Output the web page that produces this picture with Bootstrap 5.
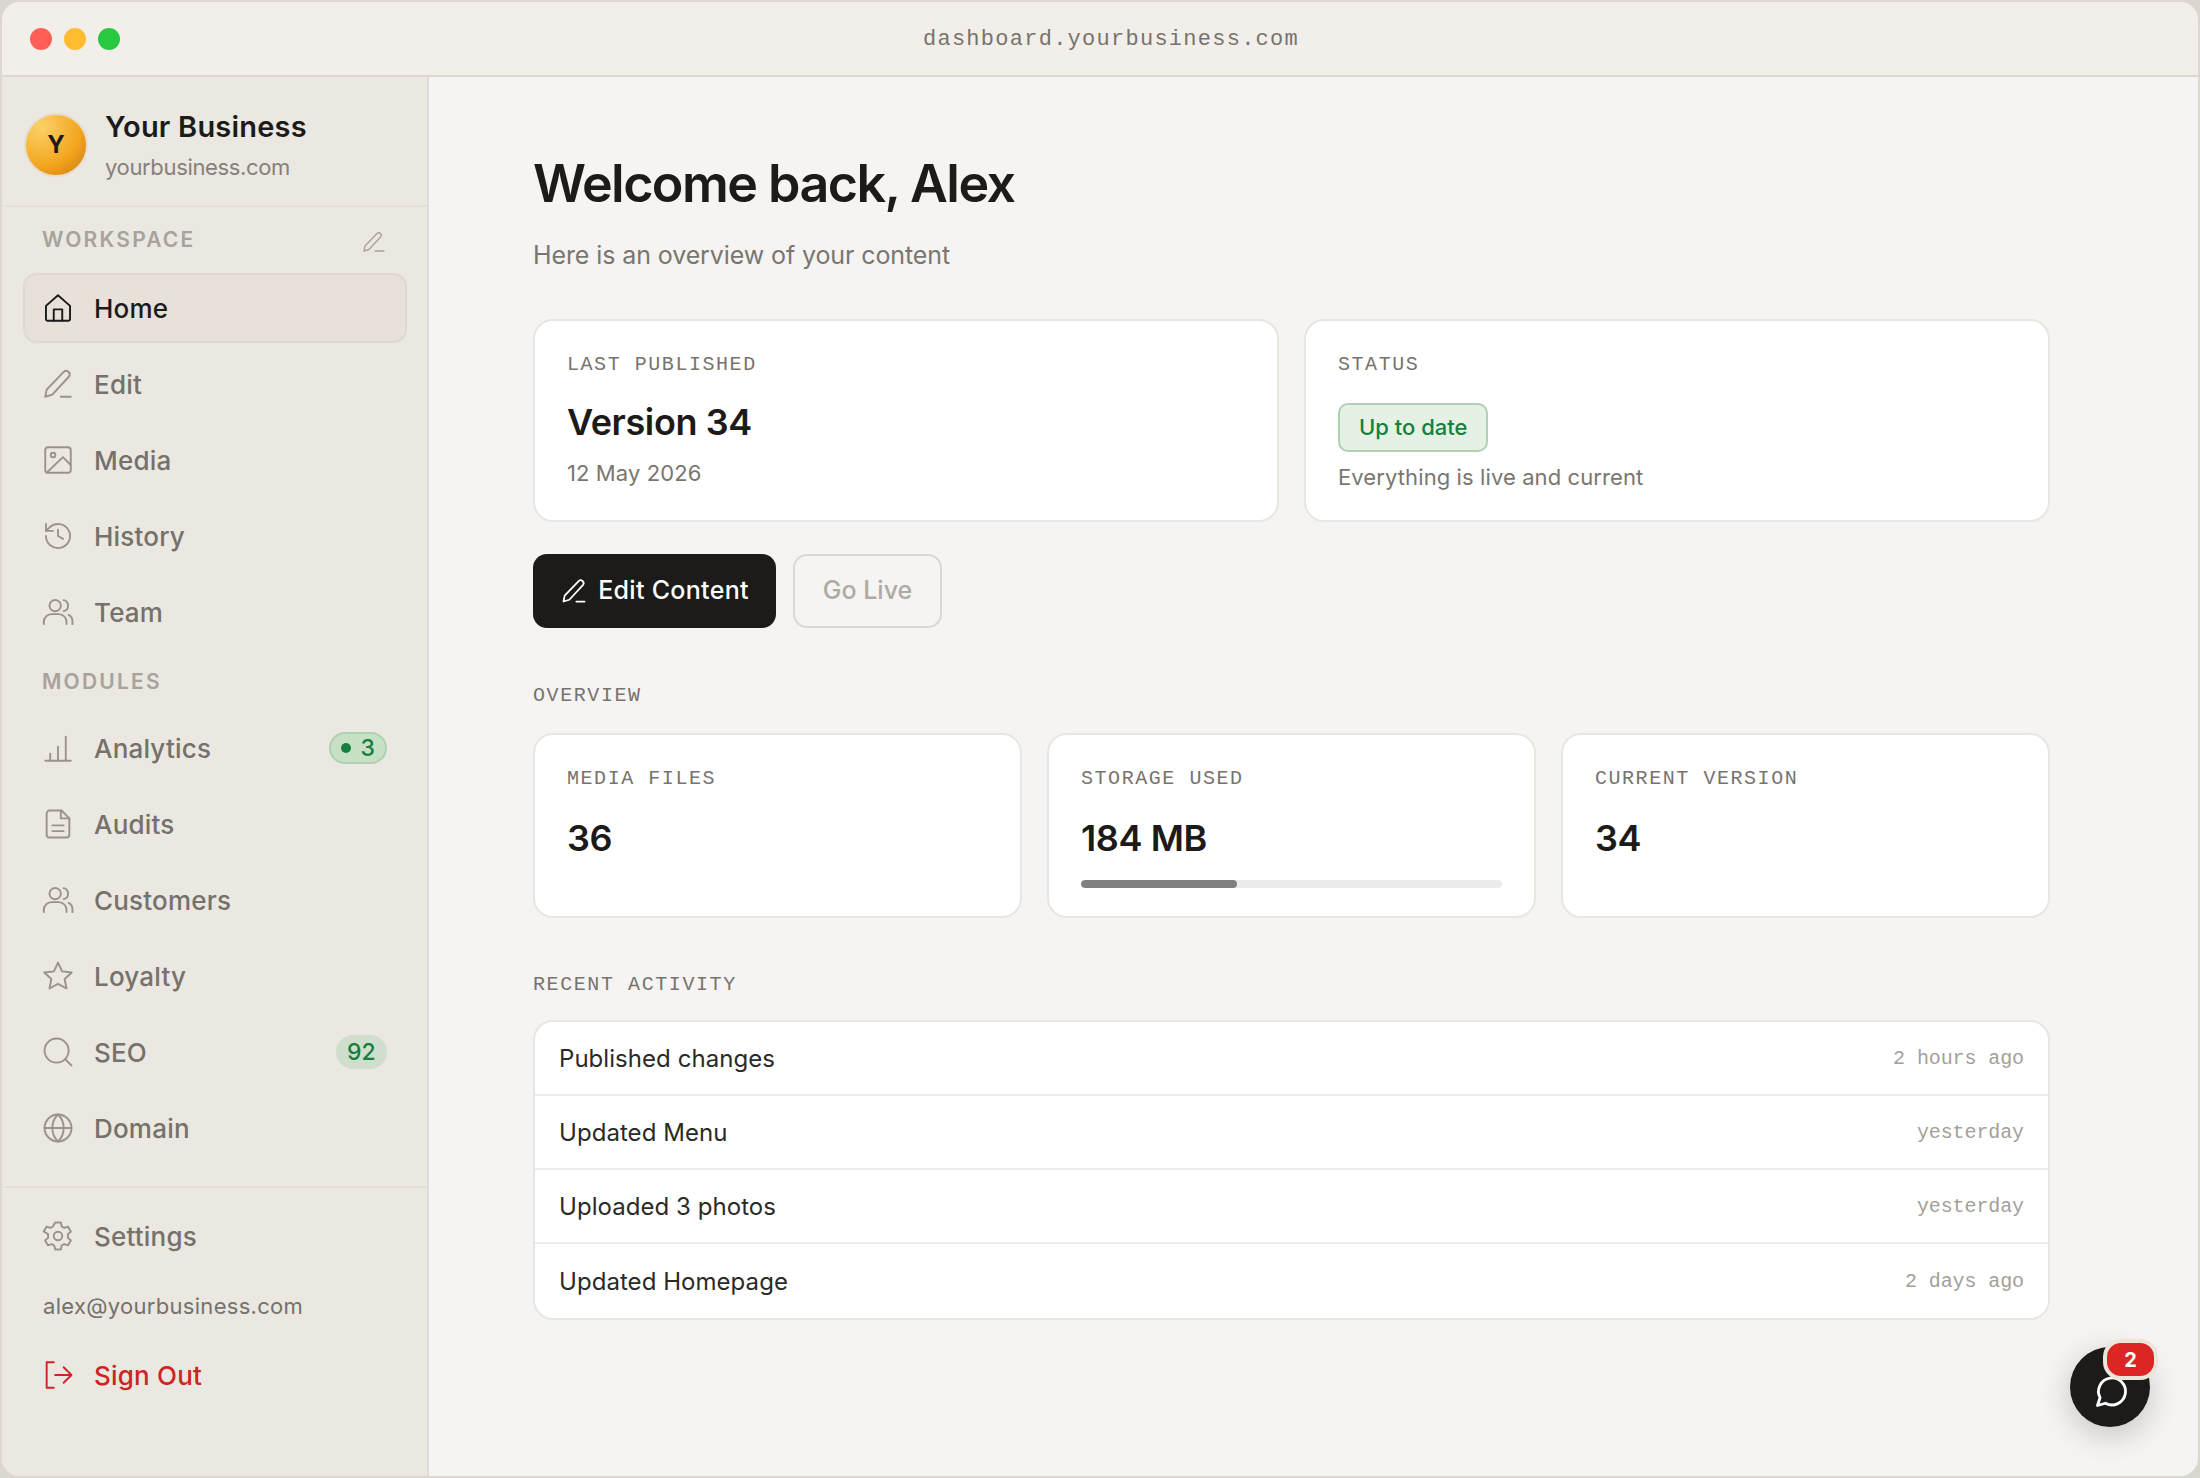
<!DOCTYPE html>
<html lang="en">
<head>
  <meta charset="UTF-8" />
  <title>Dashboard</title>
  <link href="https://cdn.jsdelivr.net/npm/bootstrap@5.3.0/dist/css/bootstrap.min.css" rel="stylesheet" />
  <style>
    html, body { height: 100%; margin: 0; background: #d9d6d0; overflow: hidden; }
    body { font-family: Inter, "Liberation Sans", sans-serif; color: #1c1b19; }

    .app-window { width: 2200px; height: 1478px; background: #f5f4f2; border: 2px solid #dcd8d1; border-radius: 20px; overflow: hidden; position: relative; }
    .app-body { min-height: 0; }

    .title-bar { height: 75px; background: #f2efea; border-bottom: 2px solid #dcd8d1; position: relative; flex-shrink: 0; padding: 2px 0 0 22px; }
    .lights-box { position: absolute; left: 28px; top: 26px; gap: 12px; }
    .light { width: 22px; height: 22px; border-radius: 50%; }
    .light-red { background: #ff5f57; }
    .light-amber { background: #febc2e; }
    .light-green { background: #28c840; }
    .url-text { font-family: "Liberation Mono", monospace; font-size: 22px; letter-spacing: 1.26px; color: #77736d; }

    .side-panel { width: 427px; flex-shrink: 0; background: #ebe7e1; border-right: 2px solid #e0dcd4; }
    .brand-box { height: 130px; padding: 8px 23px 0 22px; border-bottom: 2px solid #e4e0d9; gap: 17px; }
    .avatar-ball { width: 64px; height: 64px; border-radius: 50%; border: 2px solid #e5ddcd; background: radial-gradient(circle at 25% 20%, #fbd266, #f3a51e 60%, #c9780c 100%); font-weight: 700; font-size: 24px; color: #1c1b19; }
    .brand-name { font-size: 29px; font-weight: 600; letter-spacing: .2px; line-height: 38px; }
    .brand-site { font-size: 22px; color: #85817a; line-height: 30px; margin-top: 6px; letter-spacing: -.35px; }

    .nav-stack { padding: 0 20px 0 21px; }
    .group-label { font-size: 21px; font-weight: 600; letter-spacing: 2.2px; color: #a7a39c; padding: 0 21px 0 19px; }
    .label-top { height: 66px; }
    .label-top svg { margin-top: 4px; }
    .label-mod { height: 62px; margin-top: -2px; }
    .side-link { height: 70px; margin-bottom: 6px; padding: 0 18px 0 16px; gap: 19px; border: 2px solid transparent; border-radius: 14px; font-size: 26px; font-weight: 500; color: #75716b; text-decoration: none; letter-spacing: .2px; }
    .side-link svg, .foot-link svg { width: 34px; height: 34px; flex-shrink: 0; fill: none; stroke: #98948d; stroke-width: 1.35; stroke-linecap: round; stroke-linejoin: round; }
    .side-link.is-active { background: #e7e1da; border-color: #dfd9d1; color: #1c1b19; }
    .side-link.is-active svg { stroke: #1c1b19; }
    .count-pill { font-size: 23px; font-weight: 500; color: #15803d; background: #c7e0c6; border: 2px solid #aed2b1; border-radius: 20px; height: 32px; padding: 0 10px; gap: 9px; }
    .count-dot { width: 10px; height: 10px; border-radius: 50%; background: #15803d; }
    .score-pill { font-size: 23px; font-weight: 500; color: #15803d; background: #d0dfcd; border-radius: 20px; height: 34px; padding: 0 11px; }

    .side-foot { margin-top: 17px; border-top: 2px solid #e4e0d9; padding: 13px 21px 0 22px; }
    .foot-link { height: 70px; padding: 0 17px; gap: 19px; font-size: 26px; font-weight: 500; color: #75716b; text-decoration: none; letter-spacing: .2px; }
    .foot-mail { font-size: 22px; color: #75716b; padding-left: 19px; margin-top: 20px; line-height: 30px; letter-spacing: .3px; }
    .foot-link.sign-out { color: #cf2424; margin-top: 19px; }
    .foot-link.sign-out svg { stroke: #cf2424; }

    .main-pane { padding: 77px 148px 0 104px; min-width: 0; }
    .page-title { font-size: 52px; font-weight: 600; letter-spacing: -1.55px; line-height: 60px; margin: 0; }
    .page-sub { font-size: 25px; color: #7a766f; line-height: 34px; margin: 24px 0 0; letter-spacing: -.1px; }

    .top-row { --bs-gutter-x: 25px; --bs-gutter-y: 0; margin-top: 47px; }
    .stat-row { --bs-gutter-x: 25px; --bs-gutter-y: 0; margin-top: 0; }
    .info-card { border: 2px solid #e9e6e1; border-radius: 20px; background: #fff; padding: 32px 32px 0; }
    .top-row .info-card { height: 203px; }
    .stat-row .info-card { height: 185px; }
    .mono-label { font-family: "Liberation Mono", monospace; font-size: 20px; letter-spacing: 1.55px; color: #77736d; line-height: 24px; }
    .big-value { font-size: 36px; font-weight: 600; letter-spacing: -.4px; line-height: 44px; margin-top: 25px; }
    .top-row .big-value { margin-top: 23px; }
    .muted-line { font-size: 22px; color: #7a766f; line-height: 30px; letter-spacing: .1px; margin-top: 14px; }
    .status-chip { display: inline-flex; align-items: center; height: 49px; padding: 0 19px; margin-top: 26px; font-size: 22px; font-weight: 500; color: #15803d; background: #e4f1e4; border: 2px solid #aed2b1; border-radius: 10px; }
    .chip-line { margin-top: 10px; }

    .action-row { margin-top: 32px; gap: 17px; }
    .btn-edit { height: 74px; width: 243px; gap: 10px; padding: 0; background: #1c1b19; color: #fff; border: 0; border-radius: 14px; font-size: 25px; font-weight: 500; letter-spacing: .3px; }
    .btn-edit:hover { background: #1c1b19; color: #fff; }
    .btn-edit svg { width: 28px; height: 28px; fill: none; stroke: #fff; stroke-width: 1.5; stroke-linecap: round; stroke-linejoin: round; }
    .btn-golive { height: 74px; width: 149px; padding: 0; border: 2px solid #dcd8d1; border-radius: 14px; background: transparent; font-size: 25px; font-weight: 500; color: #aeaaa4; }
    .btn-golive:disabled { border-color: #dcd8d1; color: #aeaaa4; opacity: 1; }

    .section-label { font-family: "Liberation Mono", monospace; font-size: 20px; letter-spacing: 1.58px; color: #77736d; line-height: 24px; }
    .overview-head { margin-top: 56px; margin-bottom: 25px; }
    .activity-head { margin-top: 55px; margin-bottom: 23px; }

    .bar-track { height: 8px; background: #ebebe9; border-radius: 4px; margin-top: 20px; }
    .bar-track .progress-bar { background: #80807d; border-radius: 4px; }

    .activity-list { border: 2px solid #e9e6e1; border-radius: 20px; background: #fff; overflow: hidden; }
    .activity-row { height: 74px; padding: 2px 24px 0; border: 0; border-bottom: 2px solid #efede9; font-size: 24px; color: #2b2a27; letter-spacing: .05px; }
    .activity-row:last-child { border-bottom: 0; }
    .time-text { font-family: "Liberation Mono", monospace; font-size: 20px; color: #a3a09a; letter-spacing: -.1px; }

    .chat-fab { position: absolute; left: 2068px; top: 1345px; width: 80px; height: 80px; border-radius: 50%; background: #1c1b19; box-shadow: 0 8px 32px rgba(0,0,0,.2); }
    .chat-fab svg { width: 36px; height: 36px; margin-top: 9px; margin-left: 2px; fill: none; stroke: #fff; stroke-width: 1.9; stroke-linejoin: round; }
    .chat-count { position: absolute; left: 33px; top: -8px; width: 55px; height: 41px; border: 4px solid #ebe5da; border-radius: 18px; background: #dc2626; color: #fff; font-size: 20px; font-weight: 700; }
  </style>
</head>
<body>
  <div class="app-window d-flex flex-column">
    <div class="title-bar d-flex align-items-center justify-content-center">
      <div class="lights-box d-flex">
        <span class="light light-red"></span>
        <span class="light light-amber"></span>
        <span class="light light-green"></span>
      </div>
      <span class="url-text">dashboard.yourbusiness.com</span>
    </div>

    <div class="app-body d-flex flex-grow-1">
      <aside class="side-panel d-flex flex-column">
        <div class="brand-box d-flex align-items-center">
          <div class="avatar-ball d-flex align-items-center justify-content-center">Y</div>
          <div>
            <div class="brand-name">Your Business</div>
            <div class="brand-site">yourbusiness.com</div>
          </div>
        </div>

        <div class="nav-stack">
          <div class="group-label label-top d-flex align-items-center justify-content-between">
            <span>WORKSPACE</span>
            <svg width="24" height="24" viewBox="0 0 24 24" fill="none" stroke="#a7a39c" stroke-width="1.4" stroke-linecap="round" stroke-linejoin="round"><path d="M2 21l1-5L15 3.500a2.500 2.500 0 0 1 3.800 3.200L7 19.500z"/><path d="M13 21h9"/></svg>
          </div>
          <a class="side-link is-active d-flex align-items-center" href="#">
            <svg viewBox="0 0 24 24"><path d="M3.500 10.500 12 3l8.500 7.500V20a1 1 0 0 1-1 1h-15a1 1 0 0 1-1-1z"/><path d="M9 21v-8h6v8"/></svg>Home</a>
          <a class="side-link d-flex align-items-center" href="#">
            <svg viewBox="0 0 24 24"><path d="M3 21l1-5L16 3.500a2.500 2.500 0 0 1 3.800 3.200L8 19.500z"/><path d="M14 21h7"/></svg>Edit</a>
          <a class="side-link d-flex align-items-center" href="#">
            <svg viewBox="0 0 24 24"><rect x="3" y="3" width="18" height="18" rx="2"/><circle cx="8.500" cy="8.500" r="1.600"/><path d="M21 15.500 15.500 10 4 21"/></svg>Media</a>
          <a class="side-link d-flex align-items-center" href="#">
            <svg viewBox="0 0 24 24"><path d="M3.500 12a8.500 8.500 0 1 0 2.600-6.100L3.500 8.400"/><path d="M3.500 3.500v4.900h4.900"/><path d="M12 7.500V12l3.600 2"/></svg>History</a>
          <a class="side-link d-flex align-items-center" href="#">
            <svg viewBox="0 0 24 24"><circle cx="10" cy="7.500" r="4"/><path d="M2 20.500v-1.500a5.500 5.500 0 0 1 5.500-5.500h5a5.500 5.500 0 0 1 5.500 5.500v1.500"/><path d="M16 3.600a4 4 0 0 1 0 7.800"/><path d="M19.500 14a5 5 0 0 1 2.700 4.500v2"/></svg>Team</a>

          <div class="group-label label-mod d-flex align-items-center">MODULES</div>

          <a class="side-link d-flex align-items-center" href="#">
            <svg viewBox="0 0 24 24"><path d="M3 21h18"/><path d="M6.500 21v-5"/><path d="M12 21v-10"/><path d="M17.500 21V4"/></svg>
            <span class="flex-grow-1">Analytics</span>
            <span class="count-pill d-flex align-items-center"><span class="count-dot"></span>3</span></a>
          <a class="side-link d-flex align-items-center" href="#">
            <svg viewBox="0 0 24 24"><path d="M14.500 2.500H6a2 2 0 0 0-2 2v15a2 2 0 0 0 2 2h12a2 2 0 0 0 2-2V8z"/><path d="M14 2.500V8h6"/><path d="M8 13h8M8 17h8"/></svg>Audits</a>
          <a class="side-link d-flex align-items-center" href="#">
            <svg viewBox="0 0 24 24"><circle cx="10" cy="7.500" r="4"/><path d="M2 20.500v-1.500a5.500 5.500 0 0 1 5.500-5.500h5a5.500 5.500 0 0 1 5.500 5.500v1.500"/><path d="M16 3.600a4 4 0 0 1 0 7.800"/><path d="M19.500 14a5 5 0 0 1 2.700 4.500v2"/></svg>Customers</a>
          <a class="side-link d-flex align-items-center" href="#">
            <svg viewBox="0 0 24 24"><path d="M12 2.500l2.900 6.200 6.800.8-5 4.600 1.300 6.700-6-3.300-6 3.300 1.300-6.700-5-4.600 6.800-.8z"/></svg>Loyalty</a>
          <a class="side-link d-flex align-items-center" href="#">
            <svg viewBox="0 0 24 24"><circle cx="11" cy="11" r="8.500"/><path d="M21.500 21.500l-4.500-4.500"/></svg>
            <span class="flex-grow-1">SEO</span>
            <span class="score-pill d-flex align-items-center">92</span></a>
          <a class="side-link d-flex align-items-center" href="#">
            <svg viewBox="0 0 24 24"><circle cx="12" cy="12" r="9.500"/><path d="M2.500 12h19"/><path d="M12 2.500c3 2.800 4 6 4 9.500s-1 6.700-4 9.500c-3-2.800-4-6-4-9.500s1-6.700 4-9.500z"/></svg>Domain</a>
        </div>

        <div class="side-foot">
          <a class="foot-link d-flex align-items-center" href="#">
            <svg viewBox="0 0 24 24"><circle cx="12" cy="12" r="3"/><path d="M10 2.500h4l.6 2.800 1.800 1 2.700-.9 2 3.400-2.100 1.900v2.600l2.100 1.900-2 3.400-2.700-.9-1.800 1-.6 2.800h-4l-.6-2.800-1.800-1-2.700.9-2-3.400 2.100-1.900v-2.600L1.900 8.800l2-3.400 2.700.9 1.800-1z"/></svg>Settings</a>
          <div class="foot-mail">alex@yourbusiness.com</div>
          <a class="foot-link sign-out d-flex align-items-center" href="#">
            <svg viewBox="0 0 24 24"><path d="M9 3H4v18h5"/><path d="M10 12h11"/><path d="M16 6.500l5.500 5.500-5.500 5.500"/></svg>Sign Out</a>
        </div>
      </aside>

      <main class="main-pane flex-grow-1">
        <h1 class="page-title">Welcome back, Alex</h1>
        <p class="page-sub">Here is an overview of your content</p>

        <div class="row top-row">
          <div class="col-6">
            <div class="card info-card">
              <div class="mono-label">LAST PUBLISHED</div>
              <div class="big-value">Version 34</div>
              <div class="muted-line">12 May 2026</div>
            </div>
          </div>
          <div class="col-6">
            <div class="card info-card">
              <div class="mono-label">STATUS</div>
              <div><span class="status-chip">Up to date</span></div>
              <div class="muted-line chip-line">Everything is live and current</div>
            </div>
          </div>
        </div>

        <div class="d-flex action-row">
          <button class="btn btn-edit d-flex align-items-center justify-content-center">
            <svg viewBox="0 0 24 24"><path d="M3 21l1-5L16 3.500a2.500 2.500 0 0 1 3.800 3.200L8 19.500z"/><path d="M14 21h7"/></svg>Edit Content</button>
          <button class="btn btn-golive" disabled>Go Live</button>
        </div>

        <div class="section-label overview-head">OVERVIEW</div>
        <div class="row stat-row">
          <div class="col-4">
            <div class="card info-card">
              <div class="mono-label">MEDIA FILES</div>
              <div class="big-value">36</div>
            </div>
          </div>
          <div class="col-4">
            <div class="card info-card">
              <div class="mono-label">STORAGE USED</div>
              <div class="big-value">184 MB</div>
              <div class="progress bar-track"><div class="progress-bar" style="width:37%"></div></div>
            </div>
          </div>
          <div class="col-4">
            <div class="card info-card">
              <div class="mono-label">CURRENT VERSION</div>
              <div class="big-value">34</div>
            </div>
          </div>
        </div>

        <div class="section-label activity-head">RECENT ACTIVITY</div>
        <div class="list-group activity-list">
          <div class="list-group-item activity-row d-flex align-items-center justify-content-between"><span>Published changes</span><span class="time-text">2 hours ago</span></div>
          <div class="list-group-item activity-row d-flex align-items-center justify-content-between"><span>Updated Menu</span><span class="time-text">yesterday</span></div>
          <div class="list-group-item activity-row d-flex align-items-center justify-content-between"><span>Uploaded 3 photos</span><span class="time-text">yesterday</span></div>
          <div class="list-group-item activity-row d-flex align-items-center justify-content-between"><span>Updated Homepage</span><span class="time-text">2 days ago</span></div>
        </div>
      </main>
    </div>

    <div class="chat-fab d-flex align-items-center justify-content-center">
      <svg viewBox="0 0 24 24"><path d="M3 21l1.700-5.200A9 9 0 1 1 8.300 19.500z"/></svg>
      <span class="chat-count d-flex align-items-center justify-content-center">2</span>
    </div>
  </div>
  <script src="https://cdn.jsdelivr.net/npm/bootstrap@5.3.0/dist/js/bootstrap.bundle.min.js"></script>
</body>
</html>
